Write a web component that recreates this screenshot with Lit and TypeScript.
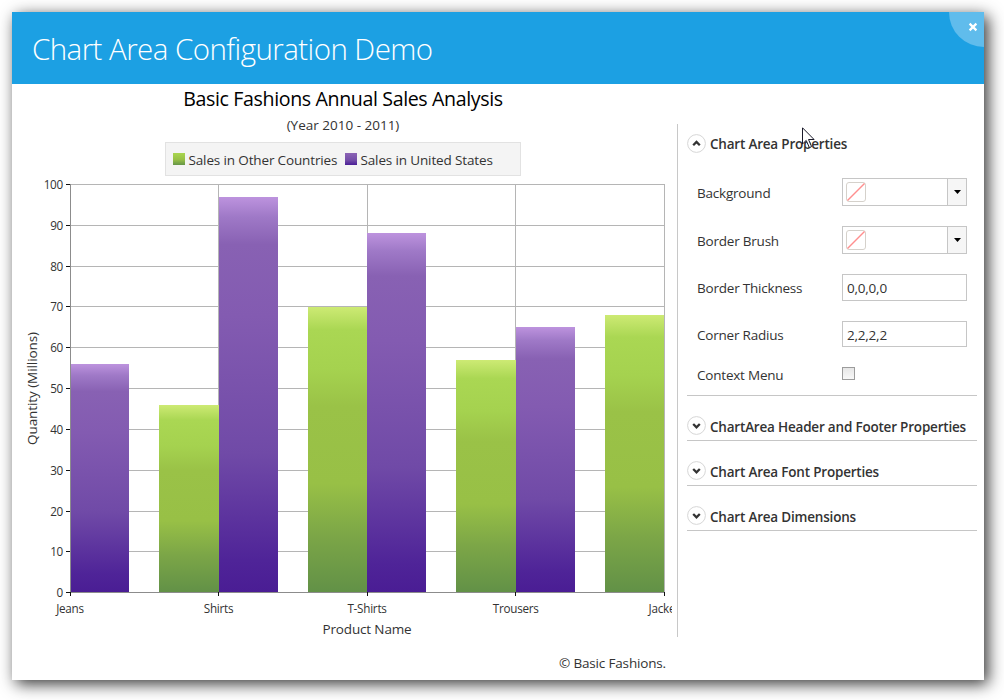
import { LitElement, html, svg, css } from "lit";
import { customElement } from "lit/decorators.js";

const ticks = [
  { v: 100, y: 184 }, { v: 90, y: 225 }, { v: 80, y: 266 }, { v: 70, y: 306 },
  { v: 60, y: 347 }, { v: 50, y: 388 }, { v: 40, y: 429 }, { v: 30, y: 470 },
  { v: 20, y: 511 }, { v: 10, y: 551 }, { v: 0, y: 592 },
];
const categories = [
  { name: "Jeans", x: 70, label: 70 }, { name: "Shirts", x: 218, label: 218.5 }, { name: "T-Shirts", x: 367, label: 367 },
  { name: "Trousers", x: 515, label: 515.7 }, { name: "Jackets", x: 664, label: 666.5 },
];
const bars = [
  { series: "us", x: 71, w: 58, y: 364 },
  { series: "other", x: 159, w: 60, y: 405 },
  { series: "us", x: 219, w: 59, y: 197 },
  { series: "other", x: 308, w: 59, y: 307 },
  { series: "us", x: 367, w: 59, y: 233 },
  { series: "other", x: 456, w: 60, y: 360 },
  { series: "us", x: 516, w: 59, y: 327 },
  { series: "other", x: 605, w: 59, y: 315 },
];

@customElement("sales-chart")
export class SalesChart extends LitElement {
  static styles = css`
    :host { display: flex; flex-direction: column; width: 662px; color: #333; }
    .title { line-height: 29px; font-size: 19.6px; letter-spacing: -0.37px; text-align: center; color: #000; }
    .subtitle { line-height: 23px; font-size: 13.5px; text-align: center; padding-top: 1px; margin-bottom: -1px; letter-spacing: 0; }
    .legend { box-sizing: border-box; align-self: center; display: flex; align-items: center; width: 356px; height: 34px; margin-top: 6px; padding: 1px 0 0 7px; background: #f4f4f4; border: 1px solid #e2e2e2; white-space: nowrap; letter-spacing: -0.14px; }
    .swatch { width: 12px; height: 12px; margin: 0 3.5px 1px 0; }
    .other { background: linear-gradient(#a9d650, #98c046 55%, #659548); }
    .us { background: linear-gradient(#8c64b5, #734da8 60%, #4a1e96); }
    .first { width: 156.5px; }
    svg { display: block; width: 660px; height: 470px; overflow: hidden; }
    .footer { height: 34px; line-height: 34px; text-align: right; padding-right: 8px; letter-spacing: -0.16px; }
    .tick { font-size: 11.7px; letter-spacing: -0.25px; }
  `;
  render() {
    return html`
      <div class="title">Basic Fashions Annual Sales Analysis</div>
      <div class="subtitle">(Year 2010 - 2011)</div>
      <div class="legend">
        <span class="swatch other"></span><span class="first">Sales in Other Countries</span>
        <span class="swatch us"></span><span>Sales in United States</span>
      </div>
      <svg viewBox="12 176 660 470" fill="#333">
        <defs>
          <linearGradient id="us" x1="0" y1="0" x2="0" y2="1">
            <stop offset="0" stop-color="#bd93de" /><stop offset="0.05" stop-color="#9f79c7" />
            <stop offset="0.12" stop-color="#8861b3" /><stop offset="0.3" stop-color="#835bb1" />
            <stop offset="0.65" stop-color="#704aa7" /><stop offset="0.92" stop-color="#4f2498" />
            <stop offset="1" stop-color="#4a1d94" />
          </linearGradient>
          <linearGradient id="other" x1="0" y1="0" x2="0" y2="1">
            <stop offset="0" stop-color="#cdea74" /><stop offset="0.08" stop-color="#aad753" />
            <stop offset="0.22" stop-color="#a5d24f" /><stop offset="0.35" stop-color="#9ac247" />
            <stop offset="0.62" stop-color="#98c046" /><stop offset="0.8" stop-color="#7ca647" />
            <stop offset="1" stop-color="#629147" />
          </linearGradient>
        </defs>
        <g fill="#b5b5b5">
          ${ticks.slice(0, -1).map((t) => svg`<rect x="70" y=${t.y} width="595" height="1" />`)}
          ${categories.slice(1).map((c) => svg`<rect x=${c.x} y="184" width="1" height="409" />`)}
        </g>
        ${bars.map((b) => svg`<rect x=${b.x} y=${b.y} width=${b.w} height=${592 - b.y} fill="url(#${b.series})" />`)}
        <rect x="70" y="184" width="1" height="409" fill="#8c8c8c" />
        <rect x="70" y="592" width="595" height="1" fill="#8c8c8c" />
        ${ticks.map((t) => svg`
          <rect x="66" y=${t.y} width="4" height="1" fill="#111" />
          <text class="tick" x="63" y=${t.y + 5} text-anchor="end">${t.v}</text>`)}
        ${categories.map((c) => svg`
          <rect x=${c.x} y="592" width="1" height="4" fill="#111" />
          <text class="tick" x=${c.label} y="613" text-anchor="middle">${c.name}</text>`)}
        <text x="367" y="634" text-anchor="middle" letter-spacing="-0.15">Product Name</text>
        <text transform="translate(37 388.5) rotate(-90)" text-anchor="middle" style="letter-spacing:-0.08px">Quantity (Millions)</text>
      </svg>
      <div class="footer">© Basic Fashions.</div>
    `;
  }
}

@customElement("property-panel")
export class PropertyPanel extends LitElement {
  static styles = css`
    :host { display: block; box-sizing: border-box; width: 300px; height: 513px; margin: 40px 0 0 3px; padding-left: 9px; border-left: 1px solid #c8c8c8; color: #333; white-space: nowrap; }
    .head { display: flex; align-items: center; gap: 4px; height: 39px; font-weight: 600; letter-spacing: -0.2px; }
    .head svg { flex: none; width: 19px; height: 19px; }
    .head span { padding-top: 1px; }
    .closed { height: 27px; padding: 16px 0 1px; border-bottom: 1px solid #c6c6c6; }
    .closed span { padding-top: 2px; }
    .rows { padding: 5px 0 5px 10px; border-bottom: 1px solid #c6c6c6; }
    .row { display: flex; align-items: center; }
    .label { width: 145px; padding-top: 2px; }
    .tall { height: 48px; }
    .mid { height: 47px; }
    .short { height: 46px; }
    .last { height: 33px; }
    .field { box-sizing: border-box; display: flex; align-items: center; width: 125px; height: 28px; border: 1px solid #c6c6c6; background: #fff; }
    .mid .field { height: 27px; }
    .short .field { height: 26px; }
    .text { padding: 2px 0 0 4px; }
    .mid .label, .mid .text { padding-top: 0; }
    .none { width: 20px; height: 20px; margin-left: 3px; }
    .drop { display: flex; align-items: center; justify-content: center; width: 18px; height: 26px; margin-left: auto; border-left: 1px solid #c6c6c6; background: #f6f6f6; }
    .drop svg { width: 7px; height: 4px; margin-right: -1px; }
    .check { box-sizing: border-box; width: 13px; height: 13px; border: 1px solid #9c9c9c; background: linear-gradient(#e6e6e6, #f8f8f8); }
  `;
  private toggle(open: boolean) {
    return svg`<svg viewBox="0 0 19 19" fill="none">
      <circle cx="9.5" cy="9.5" r="8.9" fill="#fff" stroke="#d6d6d6" />
      <path d=${open ? "M6.2 11.2 9.5 7.9l3.3 3.3" : "M6.2 8l3.3 3.3L12.8 8"} stroke="#333" stroke-width="2.3" />
    </svg>`;
  }
  private brush(label: string) {
    return html`<div class="row tall"><span class="label">${label}</span>
      <div class="field">
        <svg class="none" viewBox="0 0 20 20" fill="none">
          <rect x="0.5" y="0.5" width="19" height="19" rx="2.5" stroke="#d5d1cb" />
          <path d="M1.5 18.5 18.5 1.5" stroke="#ff8f8f" stroke-width="1.4" />
        </svg>
        <span class="drop"><svg viewBox="0 0 7 4"><path d="M0 0h7L3.5 4z" fill="#000" /></svg></span>
      </div></div>`;
  }
  render() {
    return html`
      <div class="head">${this.toggle(true)}<span>Chart Area Properties</span></div>
      <div class="rows">
        ${this.brush("Background")}${this.brush("Border Brush")}
        <div class="row mid"><span class="label">Border Thickness</span><div class="field text">0,0,0,0</div></div>
        <div class="row short"><span class="label">Corner Radius</span><div class="field text">2,2,2,2</div></div>
        <div class="row last"><span class="label">Context Menu</span><span class="check"></span></div>
      </div>
      ${["ChartArea Header and Footer Properties", "Chart Area Font Properties", "Chart Area Dimensions"].map(
        (t) => html`<div class="head closed">${this.toggle(false)}<span>${t}</span></div>`,
      )}
    `;
  }
}

@customElement("app-root")
export class AppRoot extends LitElement {
  static styles = css`
    :host { display: block; box-sizing: border-box; width: 1004px; height: 700px; padding: 12px; overflow: hidden; position: relative; background: #fff; font: 13.5px/20px "Open Sans", sans-serif; letter-spacing: -0.21px; }
    .window { width: 972px; height: 668px; background: #fff; box-shadow: 4px 4px 15px rgba(0, 0, 0, 0.8); }
    .bar { display: flex; justify-content: space-between; height: 72px; background: #1ca0e3; color: #fff; overflow: hidden; }
    .bar h1 { margin: 0; padding: 0 0 0 20px; font-size: 29.5px; font-weight: 300; line-height: 73px; letter-spacing: -0.56px; }
    .close { width: 35px; height: 35px; }
    .body { display: flex; align-items: flex-start; }
    .cursor { position: absolute; left: 802px; top: 127px; width: 14px; height: 25px; }
  `;
  render() {
    return html`
      <div class="window">
        <div class="bar">
          <h1>Chart Area Configuration Demo</h1>
          <svg class="close" viewBox="0 0 35 35">
            <circle cx="35" cy="0" r="35" fill="#60bcec" />
            <path d="M20.6 11.6l6.8 6.8M27.4 11.6l-6.8 6.8" stroke="#fff" stroke-width="2.2" />
          </svg>
        </div>
        <div class="body"><sales-chart></sales-chart><property-panel></property-panel></div>
      </div>
      <svg class="cursor" viewBox="0 0 14 25">
        <path d="M.5 .8V17l3.7-3.6 3.2 7.2 2.2-1-3.1-7.1h5.6z" fill="#fff" stroke="#1a1a2a" />
      </svg>
    `;
  }
}
